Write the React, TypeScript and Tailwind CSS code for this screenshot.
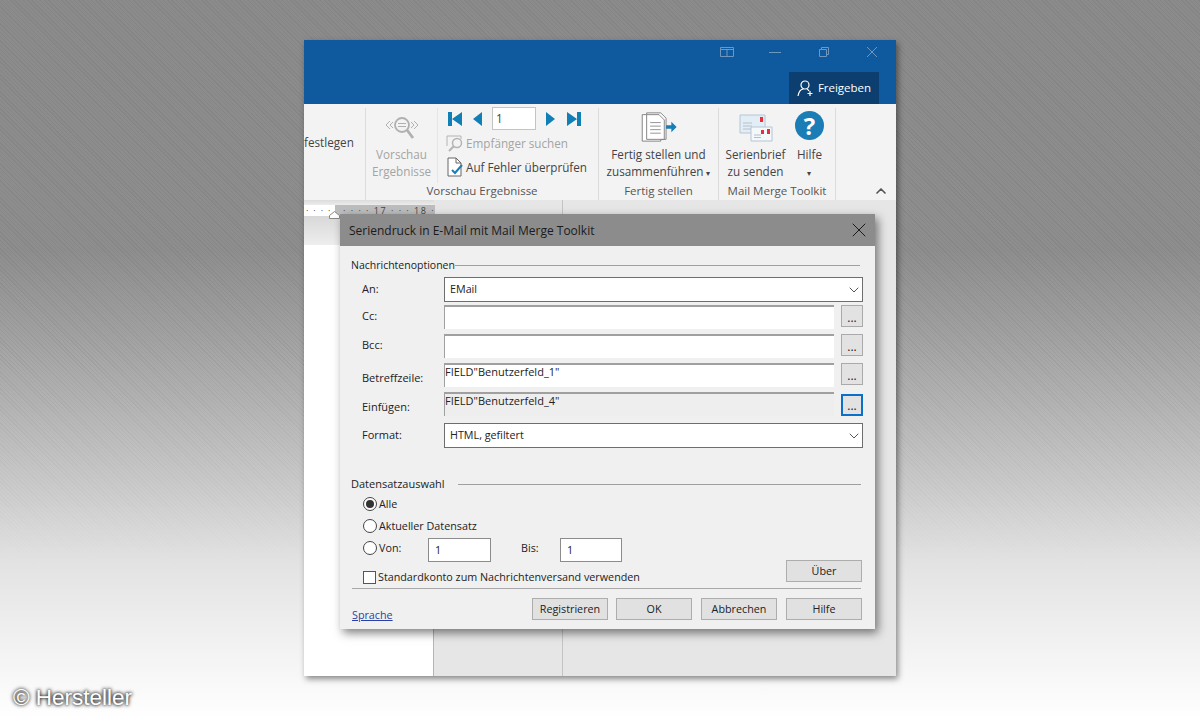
import React from 'react';
import { ChevronDown, ChevronUp, X } from 'lucide-react';

const FONT = "font-['Open_Sans','Noto_Sans',sans-serif]";

const FieldRow = ({ label, value, shaded, focus, top }: { label: string; value?: string; shaded?: boolean; focus?: boolean; top?: boolean }) => (
    <div className="flex h-[29px] items-start">
        <div className={`w-[82px] text-[11px] ${top ? 'pt-[7px]' : 'pt-[3px]'} leading-[16px]`}>{label}</div>
        <div className={`h-[24px] w-[390px] border-t-2 border-l border-[#a0a0a0] text-[11px] leading-[13px] ${shaded ? 'bg-[#eeeeee]' : 'bg-white'}`}>{value}</div>
        <div className={`ml-[7px] flex h-[22px] w-[22px] items-end justify-center bg-[#e2e2e2] pb-[3px] text-[12px] leading-[10px] ${focus ? 'mt-[2px] border-2 border-[#0a70c8]' : 'border border-[#aaaaaa]'}`}>...</div>
    </div>
);

const SelectRow = ({ label, value }: { label: string; value: string }) => (
    <div className="flex h-[25px] items-center">
        <div className="w-[82px] text-[11px]">{label}</div>
        <div className="flex h-[25px] w-[419px] items-center justify-between border border-[#6e6e6e] bg-white pl-[5px]">
            <span>{value}</span>
            <ChevronDown className="h-[16px] w-[16px] text-[#555555]" strokeWidth={1.5} />
        </div>
    </div>
);

const Radio = ({ checked }: { checked?: boolean }) => (
    <span className="ml-[1px] flex h-[14px] w-[14px] shrink-0 items-center justify-center rounded-full border border-[#444444] bg-white">
        {checked && <span className="h-[8px] w-[8px] rounded-full bg-[#333333]" />}
    </span>
);

const DlgButton = ({ children }: { children: React.ReactNode }) => (
    <div className="flex h-[22px] w-[76px] items-center justify-center border border-[#adadad] bg-[#e1e1e1]">{children}</div>
);

const RibbonGroup = ({ label, width, children }: { label: string; width: string; children: React.ReactNode }) => (
    <div className={`flex h-full flex-col border-r border-[#dcdcdc] ${width}`}>
        <div className="min-h-0 flex-1">{children}</div>
        <div className="h-[17px] text-center text-[11.5px] leading-[16px] text-[#555555]">{label}</div>
    </div>
);

const DocArrowIcon = () => (
    <svg width="36" height="30" viewBox="0 0 40 34" fill="none" className="mt-[4px] shrink-0">
        <path d="M1 3h5v-2h16l6 6v24h-6v2H1z" fill="#fff" stroke="#777" />
        <path d="M6 3h14l6 6v22H6z" fill="#fff" stroke="#777" />
        <path d="M10 12h12M10 16h12M10 20h12M10 24h12" stroke="#888" />
        <path d="M28 15h6v-4l6 6-6 6v-4h-6z" fill="#1a7db5" />
    </svg>
);

const EnvelopesIcon = () => (
    <svg width="34" height="30" viewBox="0 0 34 30" className="shrink-0">
        <path d="M1 2h25v18H1z" fill="#e3edf5" stroke="#b6c6d4" />
        <path d="M4 10h9M4 13h9M4 16h9" stroke="#b3c0cc" />
        <path d="M21 4h3v5h-3z" fill="#e7303a" />
        <path d="M12 14h21v14H12z" fill="#f4f8fb" stroke="#b6c6d4" />
        <path d="M15 22h7M15 24.500h7" stroke="#b3c0cc" />
        <path d="M28 16h3v5h-3z" fill="#e7303a" />
        <path d="M22 17h3v4h-3z" fill="#e7303a" />
    </svg>
);

export default function App() {
    return (
        <div className={`relative h-[720px] w-[1200px] overflow-hidden bg-[linear-gradient(to_bottom,#8b8b8b_0px,#8e8e8e_250px,#a0a0a0_330px,#b2b2b2_400px,#c8c8c8_480px,#e2e2e2_560px,#f1f1f1_640px,#ffffff_720px)] ${FONT}`}>
            <div className="absolute inset-0 bg-[repeating-linear-gradient(45deg,#0000000b_0px,#0000000b_1px,transparent_1px,transparent_3px)] [mask-image:linear-gradient(to_bottom,black_50%,transparent_80%)]" />

            {/* Word window */}
            <div className="absolute top-[40px] left-[304px] flex h-[636px] w-[592px] flex-col bg-[#e6e6e6] shadow-[2px_3px_6px_rgba(0,0,0,0.45)]">
                <div className="flex h-[64px] flex-col bg-[#0f5a9e]">
                    <div className="flex h-[24px] items-center pl-[416px]">
                        <svg width="14" height="10" viewBox="0 0 14 10" fill="none" stroke="#6e97c0"><path d="M.5.5h13v9H.500zM7 2.500v7M.5 2.500h13" /></svg>
                        <svg width="12" height="10" viewBox="0 0 12 10" fill="none" stroke="#6e97c0" className="ml-[35px]"><path d="M0 5.500h12" /></svg>
                        <svg width="10" height="10" viewBox="0 0 10 10" fill="none" stroke="#6e97c0" className="ml-[38px]"><path d="M.5 2.500h7v7h-7zM2.500 2.500v-2h7v7h-2" /></svg>
                        <svg width="10" height="10" viewBox="0 0 10 10" fill="none" stroke="#6e97c0" className="ml-[38px]"><path d="M0 0l10 10M10 0L0 10" /></svg>
                    </div>
                    <div className="flex flex-1 justify-end pt-[8px] pr-[17px]">
                        <div className="flex h-[32px] w-[90px] items-center justify-center gap-[3px] bg-[#0c3f70] text-[11.5px] text-white">
                            <svg width="18" height="18" viewBox="0 0 18 18" fill="none" stroke="#fff" strokeWidth="1.2">
                                <circle cx="8" cy="6" r="4" />
                                <path d="M1 17c1-5 3-7 5.500-7M10 10c1 .5 1.500 1 2 2M13 12v5M10.500 14.500h5" />
                            </svg>
                            Freigeben
                        </div>
                    </div>
                </div>

                {/* Ribbon */}
                <div className="flex h-[96px] bg-[#f3f3f3] pt-[4px] text-[11.7px] leading-[17px] text-[#444444]">
                    <RibbonGroup label="" width="w-[62px]">
                        <div className="pt-[26px]">festlegen</div>
                    </RibbonGroup>
                    <div className="flex h-full w-[233px] flex-col border-r border-[#dcdcdc]">
                        <div className="flex min-h-0 flex-1">
                            <div className="flex w-[72px] flex-col items-center border-r border-[#e6e6e6] text-[#a4a4a4]">
                                <svg width="36" height="30" viewBox="0 0 36 30" fill="none" stroke="#b0b0b0" className="mt-[8px] shrink-0">
                                    <circle cx="18" cy="9" r="7" strokeWidth="1.800" />
                                    <path d="M23 14l6 8" strokeWidth="2.800" />
                                    <path d="M6 5l-4 4 4 4M9 6l-3 3 3 3M30 5l4 4-4 4M27 6l3 3-3 3" />
                                    <path d="M14 7.500h8M14 10.500h8" strokeWidth="1" />
                                </svg>
                                <div className="text-center">Vorschau<br />Ergebnisse</div>
                            </div>
                            <div className="flex-1 pl-[8px]">
                                <div className="-mt-[1px] flex h-[23px] items-center pl-[2px] text-[#0f7fb5]">
                                    <svg width="14" height="14" viewBox="0 0 14 14" fill="currentColor"><path d="M0 0h4v14H0zM14 0v14L4 7z" /></svg>
                                    <svg width="10" height="14" viewBox="0 0 10 14" fill="currentColor" className="ml-[11px]"><path d="M9 0v14L0 7z" /></svg>
                                    <div className="ml-[9px] flex h-[23px] w-[44px] items-center border border-[#c4c4c4] bg-white pl-[3px] text-[#444444]">1</div>
                                    <svg width="10" height="14" viewBox="0 0 10 14" fill="currentColor" className="ml-[9px]"><path d="M1 0v14l9-7z" /></svg>
                                    <svg width="14" height="14" viewBox="0 0 14 14" fill="currentColor" className="ml-[12px]"><path d="M0 0v14l10-7zM10 0h4v14h-4z" /></svg>
                                </div>
                                <div className="mt-[1px] flex h-[24px] items-center gap-[2px] text-[#a4a4a4]">
                                    <svg width="18" height="18" viewBox="0 0 18 18" fill="none" stroke="#b4b4b4"><path d="M1 12V2h14v3" /><circle cx="11" cy="9" r="4.500" strokeWidth="1.500" /><path d="M8 12l-5 5" strokeWidth="2" /></svg>
                                    Empfänger suchen
                                </div>
                                <div className="flex h-[24px] items-center gap-[2px] whitespace-nowrap">
                                    <svg width="18" height="20" viewBox="0 0 18 20" fill="none"><path d="M2 1h8l5 5v13H2z" fill="#fff" stroke="#666" /><path d="M10 1v5h5" stroke="#666" /><path d="M6 13l3 3 7-8" stroke="#1a7db5" strokeWidth="2" /></svg>
                                    Auf Fehler überprüfen
                                </div>
                            </div>
                        </div>
                        <div className="h-[17px] text-center text-[11.5px] leading-[16px] text-[#555555]">Vorschau Ergebnisse</div>
                    </div>
                    <RibbonGroup label="Fertig stellen" width="w-[120px]">
                        <div className="flex h-full flex-col items-center">
                            <DocArrowIcon />
                            <div className="mt-[4px] text-center whitespace-nowrap">Fertig stellen und<br />zusammenführen <span className="text-[8px]">▾</span></div>
                        </div>
                    </RibbonGroup>
                    <RibbonGroup label="Mail Merge Toolkit" width="w-[117px]">
                        <div className="flex h-full">
                            <div className="flex w-[73px] flex-col items-center pt-[5px]">
                                <EnvelopesIcon />
                                <div className="mt-[3px] text-center whitespace-nowrap">Serienbrief<br />zu senden</div>
                            </div>
                            <div className="flex w-[35px] flex-col items-center pt-[3px]">
                                <div className="flex h-[29px] w-[29px] shrink-0 items-center justify-center rounded-full bg-[#1a7db5] text-[24px] font-bold text-white">?</div>
                                <div className="mt-[6px] text-center">Hilfe<br /><span className="text-[8px]">▾</span></div>
                            </div>
                        </div>
                    </RibbonGroup>
                    <div className="flex flex-1 items-end justify-end pr-[7px] pb-[1px]">
                        <ChevronUp className="h-[16px] w-[16px] text-[#555555]" strokeWidth={2.5} />
                    </div>
                </div>

                {/* Ruler and document */}
                <div className="flex min-h-0 flex-1">
                    <div className="flex w-[130px] flex-col">
                        <div className="h-[5px] bg-[linear-gradient(to_bottom,#dcdcdc,#ececec)]" />
                        <div className="relative flex h-[11px] text-[9px] leading-[11px] text-[#444444]">
                            <div className="w-[31px] bg-white pl-[2px] tracking-[5px] whitespace-nowrap">····</div>
                            <div className="flex-1 bg-[#bdbdbd] pl-[8px] tracking-[1.5px] whitespace-nowrap">· · · · 17 · · · 18 ·</div>
                            <svg width="11" height="8" viewBox="0 0 11 8" className="absolute top-[6px] left-[25px]"><path d="M5.500.500l5 4v3h-10v-3z" fill="#fff" stroke="#888" /></svg>
                        </div>
                        <div className="h-[29px] bg-[linear-gradient(to_bottom,#d8d8d8,#eeeeee)]" />
                        <div className="flex-1 border-r border-[#b5b5b5] bg-white" />
                    </div>
                    <div className="w-[129px] border-r border-[#c4c4c4]" />
                </div>
            </div>

            {/* Dialog */}
            <div className="absolute top-[214px] left-[340px] flex h-[415px] w-[535px] flex-col bg-[#f0f0f0] text-[10.75px] text-[#222222] shadow-[3px_4px_9px_rgba(0,0,0,0.5)]">
                <div className="flex h-[32px] items-center justify-between bg-[#8c8c8c] pr-[4px] pl-[9px] text-[12px] text-[#1b1b1b]">
                    <span className="pt-[1px]">Seriendruck in E-Mail mit Mail Merge Toolkit</span>
                    <X className="h-[24px] w-[24px]" strokeWidth={1} />
                </div>
                <div className="flex min-h-0 flex-1 flex-col pt-[12px] pr-[12px] pl-[11px]">
                    <div className="mr-[3px] flex h-[14px] items-center">
                        <span className="text-[10.5px] leading-[14px]">Nachrichtenoptionen</span>
                        <div className="h-px flex-1 bg-[#a0a0a0]" />
                    </div>
                    <div className="pt-[5px] pl-[11px]">
                        <SelectRow label="An:" value="EMail" />
                        <div className="pt-[3px]">
                            <FieldRow label="Cc:" />
                            <FieldRow label="Bcc:" />
                            <FieldRow label="Betreffzeile:" value={'FIELD"Benutzerfeld_1"'} top />
                            <FieldRow label="Einfügen:" value={'FIELD"Benutzerfeld_4"'} shaded focus top />
                        </div>
                        <div className="pt-[2px]">
                            <SelectRow label="Format:" value="HTML, gefiltert" />
                        </div>
                    </div>
                    <div className="mt-[29px] mr-[2px] flex h-[14px] items-center">
                        <span className="w-[93px] text-[11px] leading-[14px] whitespace-nowrap">Datensatzauswahl</span>
                        <div className="ml-[14px] h-px flex-1 bg-[#a0a0a0]" />
                    </div>
                    <div className="flex h-[97px] items-start pl-[11px]">
                        <div className="flex-1">
                            <div className="mt-[4px] flex h-[18px] items-center gap-[2px]"><Radio checked />Alle</div>
                            <div className="mt-[4px] flex h-[18px] items-center gap-[2px]"><Radio />Aktueller Datensatz</div>
                            <div className="mt-[3px] flex h-[24px] items-start">
                                <div className="flex h-[20px] w-[66px] items-center gap-[2px]"><Radio />Von:</div>
                                <div className="flex h-[24px] w-[63px] items-center border border-[#8c8c8c] bg-white pl-[6px]">1</div>
                                <span className="ml-[30px] flex h-[20px] w-[39px] items-center">Bis:</span>
                                <div className="flex h-[24px] w-[62px] items-center border border-[#8c8c8c] bg-white pl-[6px]">1</div>
                            </div>
                            <div className="mt-[6px] flex h-[18px] items-center gap-[2px] whitespace-nowrap">
                                <span className="ml-[1px] h-[13px] w-[13px] border border-[#555555] bg-white" />
                                Standardkonto zum Nachrichtenversand verwenden
                            </div>
                        </div>
                        <div className="mt-[69px] mr-[1px]"><DlgButton>Über</DlgButton></div>
                    </div>
                    <div className="mr-[2px] ml-[1px] h-px bg-[#a8a8a8]" />
                    <div className="flex items-start pt-[9px]">
                        <span className="mt-[9px] ml-[1px] text-[#2a3fa8] underline">Sprache</span>
                        <div className="mr-[1px] ml-auto flex gap-[9px]">
                            <div className="-mr-[1px]"><DlgButton>Registrieren</DlgButton></div>
                            <DlgButton>OK</DlgButton>
                            <DlgButton>Abbrechen</DlgButton>
                            <DlgButton>Hilfe</DlgButton>
                        </div>
                    </div>
                </div>
            </div>

            <div className="absolute top-[685px] left-[13px] font-['Liberation_Sans',sans-serif] text-[22.500px] leading-[26px] text-white [text-shadow:0_0_3px_#222,0_0_4px_#222]">© Hersteller</div>
        </div>
    );
}
